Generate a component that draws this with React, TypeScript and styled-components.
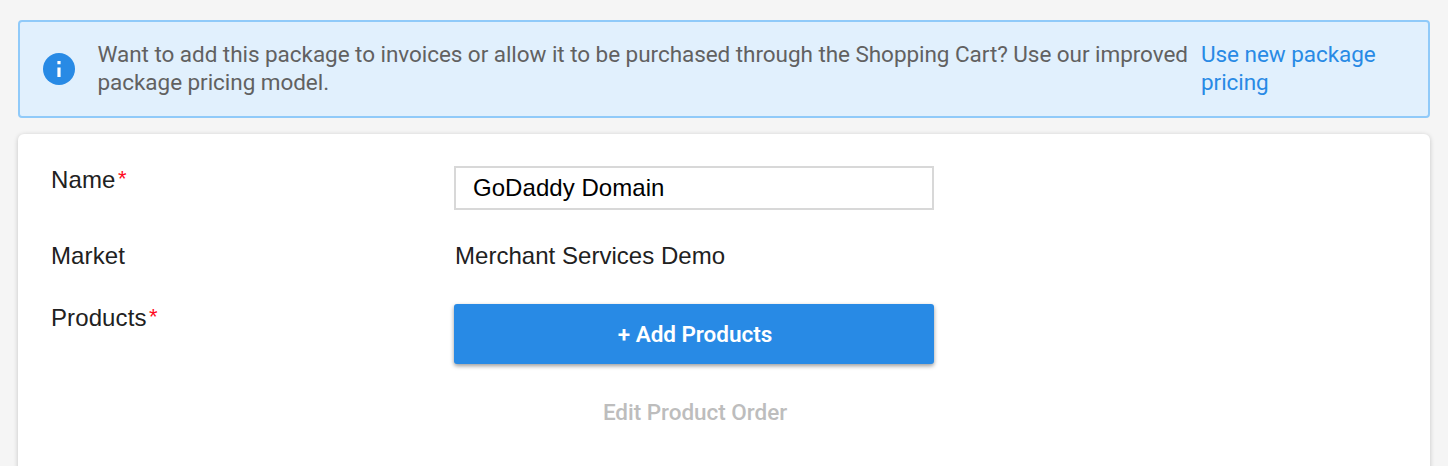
import React from "react";
import styled, { createGlobalStyle } from "styled-components";

const GlobalStyle = createGlobalStyle`
  * { box-sizing: border-box; }
  body { margin: 0; background: #f5f5f5; overflow: hidden; }
`;
const Page = styled.main`
  height: 466px;
  padding: 20px 18px 0;
  overflow: hidden;
  font-family: "Liberation Sans", Arial, sans-serif;
`;
const Banner = styled.section`
  display: flex;
  align-items: center;
  height: 98px;
  padding-left: 23px;
  border: 2px solid #90caf9;
  border-radius: 4px;
  background: #e1f0fd;
  font: 22.5px/28px Roboto, sans-serif;
  letter-spacing: -0.05px;
  color: #616161;
`;
const InfoIcon = styled.svg`
  width: 32px;
  height: 32px;
  margin-right: 22.5px;
  flex: none;
`;
const Message = styled.div`
  width: 1103.5px;
  padding-bottom: 2px;
  flex: none;
  white-space: nowrap;
`;
const BannerLink = styled.a`
  padding-bottom: 2px;
  color: #288ae5;
`;
const Card = styled.section`
  height: 400px;
  margin-top: 16px;
  padding: 32px 33px;
  border-radius: 6px;
  background: #fff;
  box-shadow: 0 1px 5px rgba(0, 0, 0, 0.2);
`;
const Row = styled.div<{ $height: number }>`
  display: grid;
  grid-template-columns: 403px 480px;
  height: ${(p) => p.$height}px;
  font-size: 24px;
  line-height: 28px;
  color: #212121;
`;
const Label = styled.label`
  letter-spacing: 0.1px;
`;
const Required = styled.span`
  color: #ff0a22;
  font-size: 22px;
  line-height: 0;
  margin-left: 2.5px;
  vertical-align: 2px;
`;
const Input = styled.input`
  width: 480px;
  height: 44px;
  padding: 0 17px;
  border: 2px solid #d8d8d8;
  font: 24px "Liberation Sans", Arial, sans-serif;
  letter-spacing: 0.05px;
  color: #000;
  outline: none;
`;
const Value = styled.div`
  padding-left: 1px;
  letter-spacing: 0.03px;
`;
const Actions = styled.div`
  display: flex;
  flex-direction: column;
  gap: 18px;
`;
const Button = styled.button<{ $primary?: boolean }>`
  height: 60px;
  padding: 0 0 0 2px;
  border: 0;
  border-radius: 3px;
  background: ${(p) => (p.$primary ? "#288ae5" : "transparent")};
  color: ${(p) => (p.$primary ? "#fff" : "#bdbdbd")};
  box-shadow: ${(p) => (p.$primary ? "0 2px 4px rgba(0,0,0,.4)" : "none")};
  font: ${(p) => (p.$primary ? 600 : 500)} 22.5px Roboto, sans-serif;
  letter-spacing: -0.03px;
`;

export default function App() {
  return (
    <Page>
      <GlobalStyle />
      <Banner>
        <InfoIcon viewBox="2 2 20 20">
          <circle cx="12" cy="12" r="10" fill="#288ae5" />
          <path d="M11 7h2v2h-2zM11 11h2v6h-2z" fill="#fff" />
        </InfoIcon>
        <Message>
          Want to add this package to invoices or allow it to be purchased through the Shopping Cart? Use our improved
          <br />
          package pricing model.
        </Message>
        <BannerLink>
          Use new package
          <br />
          pricing
        </BannerLink>
      </Banner>
      <Card>
        <Row $height={76}>
          <Label>Name<Required>*</Required></Label>
          <Input defaultValue="GoDaddy Domain" />
        </Row>
        <Row $height={62}>
          <Label>Market</Label>
          <Value>Merchant Services Demo</Value>
        </Row>
        <Row $height={138}>
          <Label>Products<Required>*</Required></Label>
          <Actions>
            <Button $primary>+ Add Products</Button>
            <Button>Edit Product Order</Button>
          </Actions>
        </Row>
      </Card>
    </Page>
  );
}
